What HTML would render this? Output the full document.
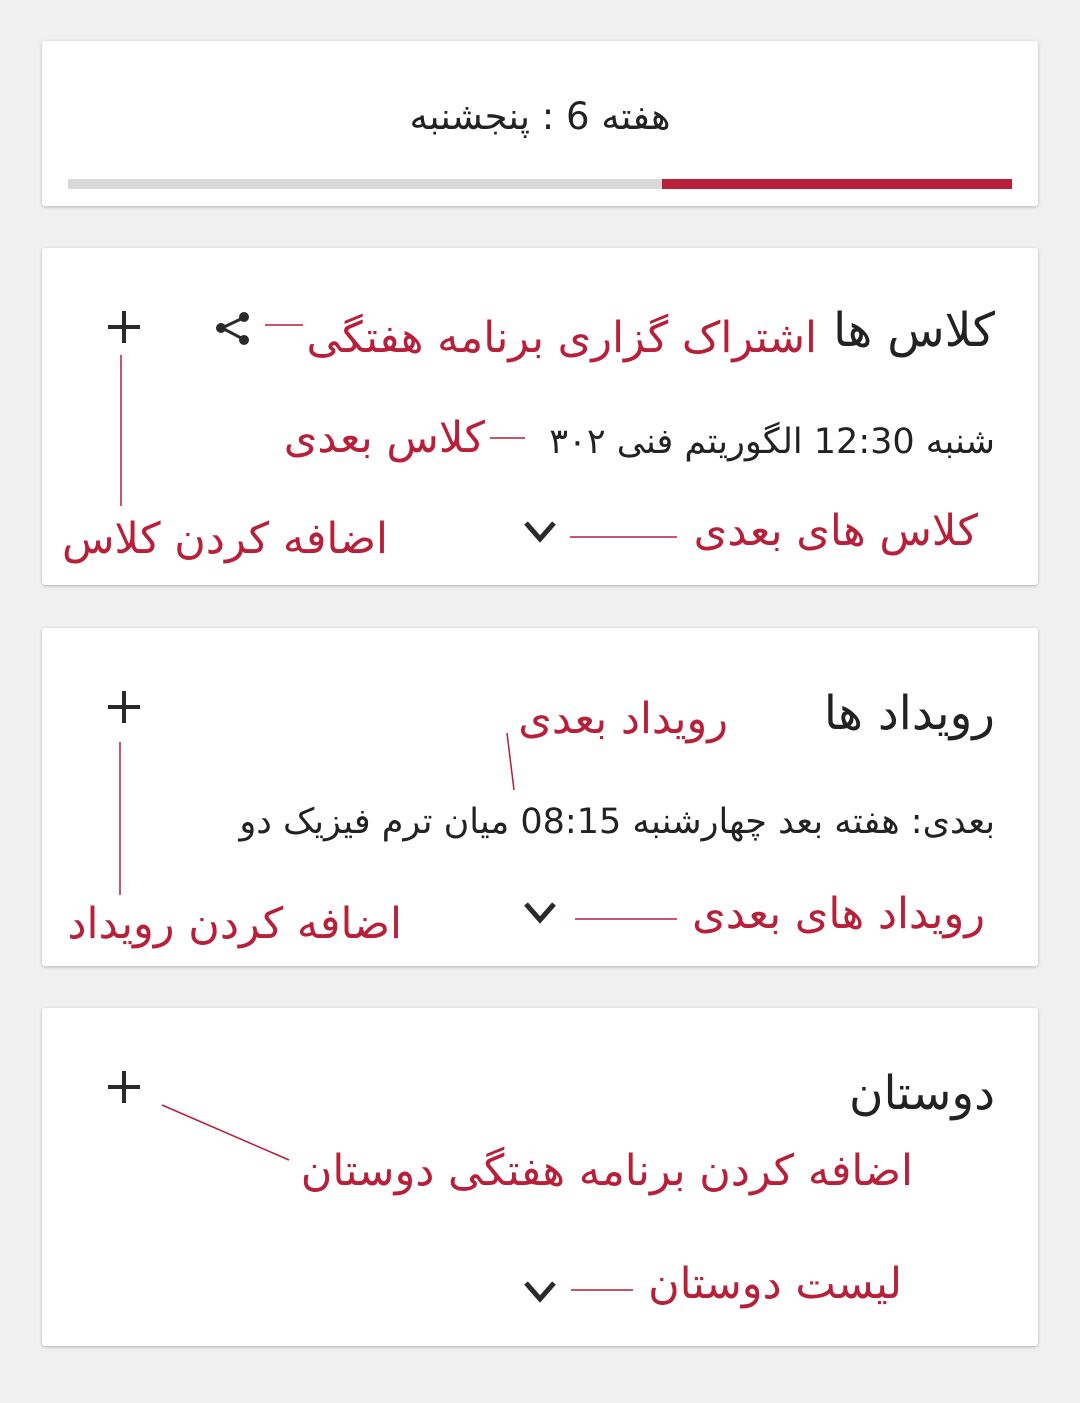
<!DOCTYPE html>
<html><head><meta charset="utf-8"><style>
body{margin:0;width:1080px;height:1403px;background:#f0f0f0;position:relative;overflow:hidden;font-family:"DejaVu Sans","Liberation Sans",sans-serif;}
.card{position:absolute;left:42px;width:996px;background:#fff;border-radius:3px;box-shadow:0 1px 3px rgba(0,0,0,.25);}
.t{position:absolute;white-space:nowrap;direction:rtl;line-height:1;color:#222;}
.r{color:#b81f39;}
</style></head><body>
<div class="card" style="top:41px;height:165px"></div>
<div class="card" style="top:248px;height:337px"></div>
<div class="card" style="top:628px;height:338px"></div>
<div class="card" style="top:1008px;height:338px"></div>
<div style="position:absolute;left:68px;top:179px;width:594px;height:10px;background:#d9d9d9"></div>
<div style="position:absolute;left:662px;top:179px;width:350px;height:10px;background:#b81f39"></div>

<div class="t" style="left:0;width:1080px;text-align:center;top:98px;font-size:37px;direction:rtl">هفته 6 : پنجشنبه</div>

<div class="t" style="right:85px;top:307px;font-size:47px">کلاس ها</div>
<div class="t r" style="right:263px;top:317px;font-size:43px">اشتراک گزاری برنامه هفتگی</div>
<div class="t" style="right:85px;top:425px;font-size:35px">شنبه 12:30 الگوریتم فنی ۳۰۲</div>
<div class="t r" style="right:595px;top:417px;font-size:43px">کلاس بعدی</div>
<div class="t r" style="right:102px;top:510px;font-size:43px">کلاس های بعدی</div>
<div class="t r" style="right:692px;top:518px;font-size:43px">اضافه کردن کلاس</div>

<div class="t" style="right:85px;top:690px;font-size:47px">رویداد ها</div>
<div class="t r" style="right:352px;top:698px;font-size:43px">رویداد بعدی</div>
<div class="t" style="right:85px;top:805px;font-size:35px">بعدی: هفته بعد چهارشنبه 08:15 میان ترم فیزیک دو</div>
<div class="t r" style="right:95px;top:893px;font-size:43px">رویداد های بعدی</div>
<div class="t r" style="right:678px;top:903px;font-size:43px">اضافه کردن رویداد</div>

<div class="t" style="right:85px;top:1070px;font-size:47px">دوستان</div>
<div class="t r" style="right:167px;top:1150px;font-size:43px">اضافه کردن برنامه هفتگی دوستان</div>
<div class="t r" style="right:178px;top:1263px;font-size:43px">لیست دوستان</div>

<svg width="1080" height="1403" style="position:absolute;left:0;top:0">
<g stroke="#2a2a2a" stroke-width="4" fill="none">
<path d="M108 327H140M124 311V343"/>
<path d="M108 707H140M124 691V723"/>
<path d="M108 1087H140M124 1071V1103"/>
<path d="M526 523L540 539L554 523" stroke-width="5"/>
<path d="M526 904L540 920L554 904" stroke-width="5"/>
<path d="M526 1283L540 1299L554 1283" stroke-width="5"/>
<path d="M243 318L222 328L243 339" stroke-width="3"/>
</g>
<g fill="#2a2a2a"><circle cx="244" cy="317" r="5"/><circle cx="221" cy="328" r="5"/><circle cx="244" cy="340" r="5"/></g>
<g stroke="#b81f39" stroke-width="1.5">
<path d="M265 325H303"/><path d="M490 438H525"/><path d="M570 537H677"/><path d="M121 355V506"/>
<path d="M507 733L514 790"/><path d="M575 919H677"/><path d="M120 742V895"/>
<path d="M162 1105L289 1160"/><path d="M571 1290H633"/>
</g>
</svg>
</body></html>
